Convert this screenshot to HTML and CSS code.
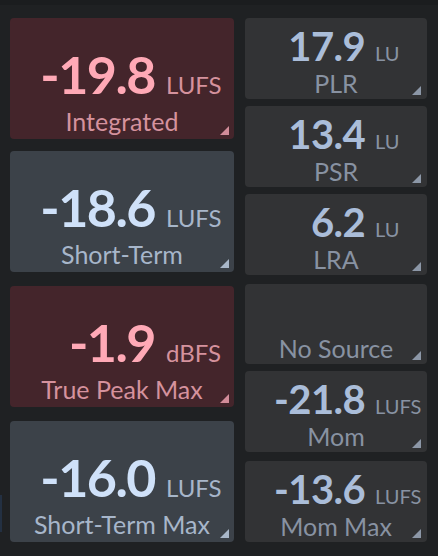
FILE: index.html
```html
<!DOCTYPE html>
<html>
<head>
<meta charset="utf-8">
<link rel="stylesheet" href="styles.css">
</head>
<body>
<div class="edge"></div>
<div class="meter">
  <div class="col col-left">
    <div class="box big red">
      <div class="value"><span class="num">-19.8</span><span class="unit">LUFS</span></div>
      <div class="label">Integrated</div>
      <span class="corner"></span>
    </div>
    <div class="box big blue">
      <div class="value"><span class="num">-18.6</span><span class="unit">LUFS</span></div>
      <div class="label">Short-Term</div>
      <span class="corner"></span>
    </div>
    <div class="box big red group">
      <div class="value"><span class="num">-1.9</span><span class="unit">dBFS</span></div>
      <div class="label">True Peak Max</div>
      <span class="corner"></span>
    </div>
    <div class="box big blue group2">
      <div class="value"><span class="num">-16.0</span><span class="unit">LUFS</span></div>
      <div class="label">Short-Term Max</div>
      <span class="corner"></span>
    </div>
  </div>
  <div class="col col-right">
    <div class="box small dark">
      <div class="value"><span class="num">17.9</span><span class="unit">LU</span></div>
      <div class="label">PLR</div>
      <span class="corner"></span>
    </div>
    <div class="box small dark">
      <div class="value"><span class="num">13.4</span><span class="unit">LU</span></div>
      <div class="label">PSR</div>
      <span class="corner"></span>
    </div>
    <div class="box small dark">
      <div class="value"><span class="num">6.2</span><span class="unit">LU</span></div>
      <div class="label">LRA</div>
      <span class="corner"></span>
    </div>
    <div class="box small dark group nosrc">
      <div class="label">No Source</div>
      <span class="corner"></span>
    </div>
    <div class="box small dark">
      <div class="value"><span class="num">-21.8</span><span class="unit">LUFS</span></div>
      <div class="label">Mom</div>
      <span class="corner"></span>
    </div>
    <div class="box small dark group2">
      <div class="value"><span class="num">-13.6</span><span class="unit">LUFS</span></div>
      <div class="label">Mom Max</div>
      <span class="corner"></span>
    </div>
  </div>
</div>
</body>
</html>
```

FILE: styles.css
```css
html, body {
  margin: 0;
  padding: 0;
  background: #1f2123;
  width: 438px;
  height: 556px;
  overflow: hidden;
  font-family: Lato, "Open Sans", sans-serif;
}
body {
  position: relative;
  border-top: 5px solid #1b1d1f;
  box-sizing: border-box;
}
.edge {
  position: absolute;
  left: 0;
  top: 490px;
  width: 2px;
  height: 37px;
  background: #233042;
}
.meter {
  display: flex;
  gap: 11px;
  padding: 13px 0 0 10px;
}
.col {
  display: flex;
  flex-direction: column;
}
.col-left { width: 224px; gap: 12px; }
.col-right { width: 182px; gap: 7px; }
.col-left .group { margin-top: 2px; }
.col-left .group2 { margin-top: 2px; }
.col-right .group { margin-top: 2px; }
.col-right .group2 { margin-top: 2px; }

.box {
  position: relative;
  border-radius: 4px;
  display: flex;
  flex-direction: column;
  box-sizing: border-box;
}
.big { height: 121px; padding-top: 31px; }
.small { height: 81px; padding-top: 8px; }
.small.nosrc { height: 80px; }

.value {
  display: flex;
  justify-content: flex-end;
  align-items: baseline;
  white-space: nowrap;
}
.num {
  font-weight: 700;
}
.unit {
  font-weight: 400;
  line-height: 1;
}
.big .value { font-size: 52px; line-height: 50px; }
.big .num { letter-spacing: -1.5px; margin-right: 11px; }
.big .unit { font-size: 24px; width: 68px; }
.small .value { font-size: 40px; line-height: 40px; }
.small .num { letter-spacing: -0.6px; margin-right: 10px; }
.small .unit { font-size: 20px; width: 52px; }

.label {
  margin-top: auto;
  text-align: center;
}
.big .label { font-size: 25px; line-height: 25px; padding-bottom: 5px; }
.small .label { font-size: 25px; line-height: 25px; padding-bottom: 3px; }

.corner {
  position: absolute;
  right: 5px;
  bottom: 4px;
  width: 9px;
  height: 9px;
  clip-path: polygon(100% 0, 100% 100%, 0 100%);
}
.small .corner { right: 6px; }

.red { background: #44252b; }
.red .num { color: #ffa9b6; }
.red .unit, .red .label { color: #d5929d; }
.red .corner { background: #d28c99; }

.blue { background: #3c4249; }
.blue .num { color: #cfe1f9; }
.blue .unit, .blue .label { color: #a7b6ca; }
.blue .corner { background: #a8b6c8; }

.dark { background: #323335; }
.dark .num { color: #aabdd9; }
.dark .unit, .dark .label { color: #8892a2; }
.dark .corner { background: #8c97a7; }
```
